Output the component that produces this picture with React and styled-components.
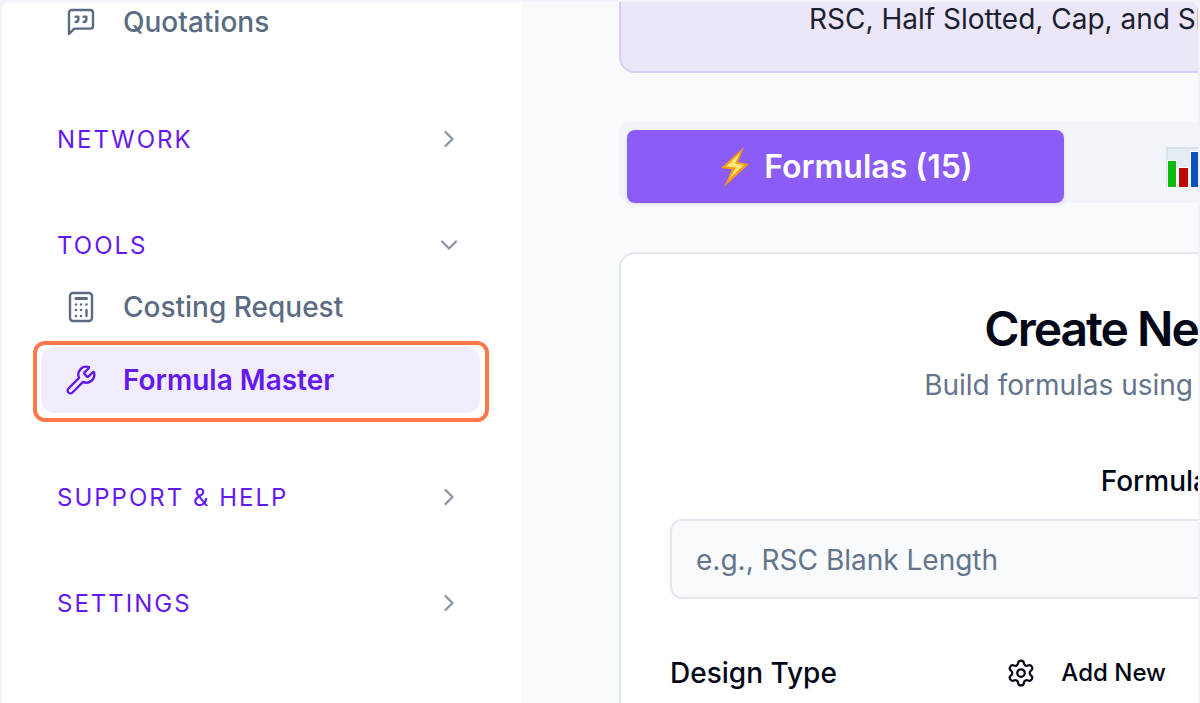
import React from 'react';
import styled, { createGlobalStyle } from 'styled-components';
import { ChevronRight, ChevronDown, Wrench, Settings } from 'lucide-react';

const GlobalStyle = createGlobalStyle`
  * { box-sizing: border-box; }
  body {
    margin: 0;
    background: #f3f2fa;
    font-family: Inter, sans-serif;
    color: #020817;
  }
  h1, p { margin: 0; }
  button, input { font: inherit; color: inherit; }
`;

const Shell = styled.div`
  display: flex;
  height: 100vh;
  border: 2px solid #f3f2fa;
  border-bottom: 0;
  border-radius: 10px 10px 0 0;
  overflow: hidden;
  background: #f8fafc;
`;

const Sidebar = styled.nav`
  flex: 0 0 519px;
  margin-top: -13px;
  padding: 0 41px 0 39px;
  background: #fff;
`;

const Section = styled.section`
  margin-bottom: 48px;
`;

const SectionToggle = styled.button`
  display: flex;
  align-items: center;
  justify-content: space-between;
  width: 100%;
  height: 58px;
  padding: 0 17px 0 16px;
  border: 0;
  background: none;
  color: #6419ee;
  font-size: 24px;
  letter-spacing: 2px;
  text-align: left;

  svg {
    color: #8c95a5;
  }
`;

const NavList = styled.div`
  display: grid;
  gap: 7px;
  padding-bottom: 7px;
`;

const NavLink = styled.a`
  position: relative;
  display: flex;
  align-items: center;
  gap: 26px;
  height: 66px;
  padding: 0 24px;
  border-radius: 14px;
  color: ${(p) => (p.$active ? '#6419ee' : '#5b6b82')};
  background: ${(p) => (p.$active ? '#f2edfd' : 'none')};
  font-size: 28px;
  font-weight: ${(p) => (p.$active ? 600 : 500)};
  text-decoration: none;
`;

// callout ring drawn over the current item
const Ring = styled.span`
  position: absolute;
  inset: -6px -9px -9px -8px;
  border: 4px solid #ff7849;
  border-radius: 12px;
  pointer-events: none;
`;

const Main = styled.main`
  flex: 1;
  min-width: 0;
  padding-left: 98px;
  overflow: hidden;
`;

const Content = styled.div`
  min-width: 1166px;
`;

const Banner = styled.div`
  height: 71px;
  padding: 0 188px;
  border: 2px solid #d9cdf8;
  border-top: 0;
  border-radius: 0 0 16px 16px;
  background: #ece7f8;
  color: #1a2032;
  font-size: 28px;
  line-height: 34px;
`;

const TabBar = styled.div`
  display: flex;
  margin: 49px 0;
  padding: 8px 8px 0;
  border-radius: 10px;
  background: #f1f5f9;
`;

const Tab = styled.button`
  display: flex;
  flex: 0 0 437px;
  align-items: center;
  justify-content: center;
  gap: 14px;
  height: 73px;
  border: 0;
  border-radius: 8px;
  background: ${(p) => (p.$active ? '#8b5cf6' : 'none')};
  box-shadow: ${(p) => (p.$active ? '0 2px 4px rgba(15, 23, 42, 0.1)' : 'none')};
  color: ${(p) => (p.$active ? '#fff' : '#64748b')};
  font-size: 32px;
  font-weight: 600;
`;

const Card = styled.section`
  padding: 47px 49px;
  border: 2px solid #e2e8f0;
  border-radius: 16px;
  background: #fff;
`;

const CardTitle = styled.h1`
  font-size: 48px;
  font-weight: 600;
  line-height: 56px;
  letter-spacing: -2px;
  text-align: center;
`;

const CardText = styled.p`
  color: #64748b;
  font-size: 28px;
  line-height: 56px;
  text-align: center;
`;

const Field = styled.div`
  margin-top: 50px;
`;

const Label = styled.label`
  display: block;
  font-size: 28px;
  font-weight: 500;
  line-height: 36px;
  text-align: center;
`;

const TextInput = styled.input`
  display: block;
  width: 100%;
  height: 80px;
  margin-top: 20px;
  padding: 2px 24px 0;
  border: 2px solid #e2e8f0;
  border-radius: 12px;
  background: #f8fafc;
  font-size: 28px;

  &::placeholder {
    color: #64748b;
    opacity: 1;
  }
`;

const FieldHead = styled.div`
  display: flex;
  align-items: center;
  justify-content: space-between;
  width: 496px;
  margin-top: 50px;
`;

const AddButton = styled.button`
  display: flex;
  align-items: center;
  gap: 25px;
  padding: 0;
  border: 0;
  background: none;
  font-size: 24px;
  font-weight: 500;
  line-height: 48px;
`;

function QuoteIcon() {
  return (
    <svg width="32" height="32" viewBox="0 0 24 24" fill="none" stroke="currentColor" strokeWidth="1.8" strokeLinecap="round" strokeLinejoin="round" aria-hidden="true">
      <path d="M21 15a2 2 0 0 1-2 2H7l-4 4V5a2 2 0 0 1 2-2h14a2 2 0 0 1 2 2z" />
      <path d="M8 12a2 2 0 0 0 2-2V8H8" />
      <path d="M14 12a2 2 0 0 0 2-2V8h-2" />
    </svg>
  );
}

function CalculatorIcon() {
  return (
    <svg width="32" height="32" viewBox="0 0 32 32" fill="none" stroke="currentColor" strokeLinecap="round" aria-hidden="true">
      <rect x="5" y="2" width="22" height="28" rx="3" strokeWidth="2.4" />
      <path d="M11 7.500h10.500" strokeWidth="3" />
      <path d="M11 13.500h.01M16 13.500h.01M21.500 13.500h.01M11 19h.01M16 19h.01M11 25h.01M16 25h.01" strokeWidth="2.600" />
      <path d="M21.500 19v6" strokeWidth="2.400" />
    </svg>
  );
}

function BoltIcon() {
  return (
    <svg width="32" height="42" viewBox="0 0 32 42" aria-hidden="true">
      <path d="M26 1 3 22l11 1.500L6 41l25-23-11-2z" fill="#f59a13" />
      <path d="M22 7 8 20.500l10 1L11 33l15-14-9-1.500z" fill="#ffe873" />
    </svg>
  );
}

function ChartIcon() {
  return (
    <svg width="42" height="42" viewBox="0 0 42 42" aria-hidden="true">
      <path d="M0 1h42v40H0z" fill="#d9e2e9" />
      <path d="M2 3h38v37H2z" fill="#e6edf2" />
      <path d="M1 14h10v27H1zM12 21h11v20H12zM24 5h11v36H24z" fill="#fff" />
      <path d="M2 15h8v26H2z" fill="#0dbb10" />
      <path d="M13 22h9v19h-9z" fill="#bd0808" />
      <path d="M25 6h9v35h-9z" fill="#0a52bd" />
    </svg>
  );
}

function NavSection({ title, open, children }) {
  const Chevron = open ? ChevronDown : ChevronRight;
  return (
    <Section>
      <SectionToggle type="button" aria-expanded={!!open}>
        {title}
        <Chevron size={28} />
      </SectionToggle>
      {children}
    </Section>
  );
}

export default function App() {
  return (
    <>
      <GlobalStyle />
      <Shell>
        <Sidebar>
          <Section>
            <NavList>
              <NavLink href="#quotations">
                <QuoteIcon />
                Quotations
              </NavLink>
            </NavList>
          </Section>
          <NavSection title="NETWORK" />
          <NavSection title="TOOLS" open>
            <NavList>
              <NavLink href="#costing">
                <CalculatorIcon />
                Costing Request
              </NavLink>
              <NavLink href="#formulas" $active>
                <Wrench size={32} strokeWidth={1.8} />
                Formula Master
                <Ring />
              </NavLink>
            </NavList>
          </NavSection>
          <NavSection title="SUPPORT &amp; HELP" />
          <NavSection title="SETTINGS" />
        </Sidebar>
        <Main>
          <Content>
            <Banner>RSC, Half Slotted, Cap, and Sleeve</Banner>
            <TabBar>
              <Tab type="button" $active>
                <BoltIcon />
                Formulas (15)
              </Tab>
              <Tab type="button">
                <ChartIcon />
                Parameters
              </Tab>
            </TabBar>
            <Card>
              <CardTitle>Create New Formula</CardTitle>
              <CardText>Build formulas using fields with operators.</CardText>
              <Field>
                <Label htmlFor="formula-name">Formula Name:</Label>
                <TextInput id="formula-name" placeholder="e.g., RSC Blank Length" />
              </Field>
              <FieldHead>
                <Label as="span">Design Type</Label>
                <AddButton type="button">
                  <Settings size={30} strokeWidth={1.8} />
                  Add New
                </AddButton>
              </FieldHead>
            </Card>
          </Content>
        </Main>
      </Shell>
    </>
  );
}
